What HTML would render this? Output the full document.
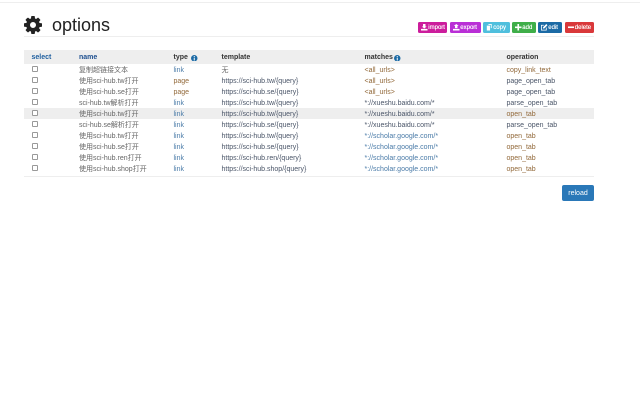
<!DOCTYPE html>
<html><head><meta charset="utf-8">
<style>
html,body{margin:0;padding:0;background:#fff;width:640px;height:400px;overflow:hidden}
body{font-family:"Liberation Sans","Noto Sans CJK SC",sans-serif;font-size:7px;color:#666}
#w{position:absolute;left:0;top:0;width:640px;height:400px;filter:blur(.3px)}
.a{position:absolute;white-space:nowrap}
.r{position:absolute;left:24px;width:570px;height:11px;line-height:11px}
.r span{position:absolute;top:1px;white-space:nowrap}
.r i{position:absolute;left:7.5px;top:2px;width:4px;height:4px;border:1px solid #999;border-radius:1px;background:#fff}
.n{left:55px}.t{left:149.5px}.u{left:197.5px}.m{left:340.5px}.o{left:482.5px}
.b{color:#4a7ba8}.br{color:#92693a}.d{color:#4a5568}
.h{font-weight:bold;color:#333;background:#eee;height:14px;top:50px;line-height:14px}
.btn{position:absolute;top:22px;height:11px;line-height:11px;border-radius:1.5px;color:#fff;font-size:6px;white-space:nowrap}
.btn svg{position:absolute;left:3px;top:2px;width:6.5px;height:6.5px}
.btn b{position:absolute;left:10.3px;top:1px;font-weight:normal;text-shadow:0 0 .4px #fff}
.info{position:absolute;top:4.5px;width:6.5px;height:6.5px}
</style></head><body><div id="w">
<div class="a" style="left:0;top:2px;width:640px;height:1px;background:#eee"></div>
<svg class="a" style="left:24px;top:16px;width:18px;height:18px" viewBox="128 128 1536 1536"><path fill="#222" d="M1152 896q0-106-75-181t-181-75-181 75-75 181 75 181 181 75 181-75 75-181zm512-109v222q0 12-8 23t-20 13l-185 28q-19 54-39 91 35 50 107 138 10 12 10 25t-9 23q-27 37-99 108t-94 71q-12 0-26-9l-138-108q-44 23-91 38-16 136-29 186-7 28-36 28h-222q-14 0-24.500-8.500t-11.500-21.500l-28-184q-49-16-90-37l-141 107q-10 9-25 9-14 0-25-11-126-114-165-168-7-10-7-23 0-12 8-23 15-21 51-66.500t54-70.500q-27-50-41-99l-183-27q-13-2-21-12.500t-8-23.500v-222q0-12 8-23t19-13l186-28q14-46 39-92-40-57-107-138-10-12-10-24 0-10 9-23 26-36 98.500-107.500t94.500-71.500q13 0 26 10l138 107q44-23 91-38 16-136 29-186 7-28 36-28h222q14 0 24.500 8.500t11.500 21.500l28 184q49 16 90 37l142-107q9-9 24-9 13 0 25 10 129 119 165 170 7 8 7 22 0 12-8 23-15 21-51 66.500t-54 70.500q26 50 41 98l183 28q13 2 21 12.500t8 23.500z"/></svg>
<div class="a" style="left:52px;top:13px;font-size:18px;line-height:24px;color:#222">options</div>
<div class="a" style="left:24px;top:36px;width:570px;height:1px;background:#eee"></div>

<div class="btn" style="left:418px;width:29px;background:#cc1d9c"><svg viewBox="0 0 8 8"><path fill="#fff" d="M2.500 0h3v3h1.500L4 5.500 1 3h1.500zM0 6h8v2H0z"/></svg><b>import</b></div>
<div class="btn" style="left:450px;width:30.500px;background:#b92fd6"><svg viewBox="0 0 8 8"><path fill="#fff" d="M4 0l3 2.500H5.500V5h-3V2.500H1zM0 6h8v2H0z"/></svg><b>export</b></div>
<div class="btn" style="left:483px;width:27px;background:#4fbfdd"><svg viewBox="0 0 8 8"><path fill="#fff" d="M3 0h4v5H6V1H3zM1 2h4v6H1z"/></svg><b>copy</b></div>
<div class="btn" style="left:512px;width:23.500px;background:#3fae49"><svg viewBox="0 0 8 8"><path fill="#fff" d="M3 0h2v3h3v2H5v3H3V5H0V3h3z"/></svg><b>add</b></div>
<div class="btn" style="left:538px;width:23.500px;background:#1b6aa5"><svg viewBox="0 0 8 8"><path fill="none" stroke="#fff" d="M6.500 4.500v3h-6v-6h3"/><path fill="#fff" d="M6.500 0L8 1.500 4 5.500H2.500V4z"/></svg><b>edit</b></div>
<div class="btn" style="left:564.500px;width:29.500px;background:#d9383a"><svg viewBox="0 0 8 8"><path fill="#fff" d="M0 3h8v2H0z"/></svg><b>delete</b></div>

<div class="r h"><span style="left:7.500px;color:#1f5f9f">select</span><span class="n" style="color:#1d4f8f">name</span><span class="t">type</span><svg class="info" style="left:167px" viewBox="0 0 8 8"><circle cx="4" cy="4" r="4" fill="#1b6aa5"/><path fill="#fff" d="M3.400 1.300h1.200v1.100H3.400zM3.400 3.200h1.200v3.500H3.400z"/></svg><span class="u">template</span><span class="m">matches</span><svg class="info" style="left:370px" viewBox="0 0 8 8"><circle cx="4" cy="4" r="4" fill="#1b6aa5"/><path fill="#fff" d="M3.400 1.300h1.200v1.100H3.400zM3.400 3.200h1.200v3.500H3.400z"/></svg><span class="o">operation</span></div>

<div class="r" style="top:64px"><i></i><span class="n">复制超链接文本</span><span class="t b">link</span><span class="u">无</span><span class="m br">&lt;all_urls&gt;</span><span class="o br">copy_link_text</span></div>
<div class="r" style="top:75px"><i></i><span class="n">使用sci-hub.tw打开</span><span class="t br">page</span><span class="u d">https://sci-hub.tw/{query}</span><span class="m br">&lt;all_urls&gt;</span><span class="o d">page_open_tab</span></div>
<div class="r" style="top:86px"><i></i><span class="n">使用sci-hub.se打开</span><span class="t br">page</span><span class="u d">https://sci-hub.se/{query}</span><span class="m br">&lt;all_urls&gt;</span><span class="o d">page_open_tab</span></div>
<div class="r" style="top:97px"><i></i><span class="n">sci-hub.tw解析打开</span><span class="t b">link</span><span class="u d">https://sci-hub.tw/{query}</span><span class="m d">*://xueshu.baidu.com/*</span><span class="o d">parse_open_tab</span></div>
<div class="r" style="top:108px;background:#eee"><i></i><span class="n">使用sci-hub.tw打开</span><span class="t b">link</span><span class="u d">https://sci-hub.tw/{query}</span><span class="m d">*://xueshu.baidu.com/*</span><span class="o br">open_tab</span></div>
<div class="r" style="top:119px"><i></i><span class="n">sci-hub.se解析打开</span><span class="t b">link</span><span class="u d">https://sci-hub.se/{query}</span><span class="m d">*://xueshu.baidu.com/*</span><span class="o d">parse_open_tab</span></div>
<div class="r" style="top:130px"><i></i><span class="n">使用sci-hub.tw打开</span><span class="t b">link</span><span class="u d">https://sci-hub.tw/{query}</span><span class="m b">*://scholar.google.com/*</span><span class="o br">open_tab</span></div>
<div class="r" style="top:141px"><i></i><span class="n">使用sci-hub.se打开</span><span class="t b">link</span><span class="u d">https://sci-hub.se/{query}</span><span class="m b">*://scholar.google.com/*</span><span class="o br">open_tab</span></div>
<div class="r" style="top:152px"><i></i><span class="n">使用sci-hub.ren打开</span><span class="t b">link</span><span class="u d">https://sci-hub.ren/{query}</span><span class="m b">*://scholar.google.com/*</span><span class="o br">open_tab</span></div>
<div class="r" style="top:163px"><i></i><span class="n">使用sci-hub.shop打开</span><span class="t b">link</span><span class="u d">https://sci-hub.shop/{query}</span><span class="m b">*://scholar.google.com/*</span><span class="o br">open_tab</span></div>
<div class="a" style="left:24px;top:176px;width:570px;height:1px;background:#eee"></div>

<div class="a" style="left:562px;top:185px;width:32px;height:16px;line-height:18px;background:#2a78b8;border-radius:2px;color:#fff;text-align:center;font-size:7px">reload</div>
</div></body></html>
